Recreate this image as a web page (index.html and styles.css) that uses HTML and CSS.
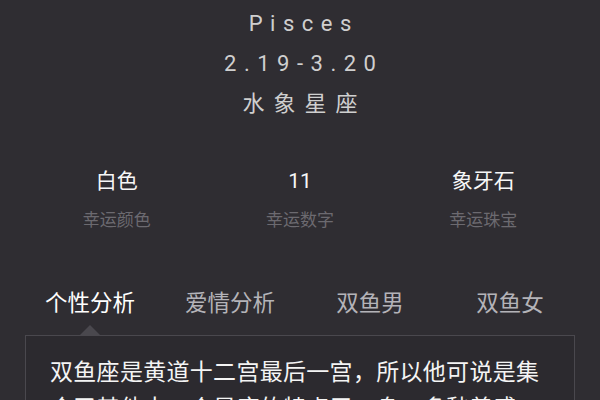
FILE: index.html
```html
<!DOCTYPE html>
<html lang="zh-CN">
<head>
<meta charset="utf-8">
<title>Pisces</title>
<link rel="stylesheet" href="styles.css">
</head>
<body>
<div class="page">
  <header class="sign">
    <div class="sign-name">Pisces</div>
    <div class="sign-date">2.19-3.20</div>
    <div class="sign-elem">水象星座</div>
  </header>
  <section class="stats">
    <div class="stat">
      <div class="stat-value">白色</div>
      <div class="stat-label">幸运颜色</div>
    </div>
    <div class="stat">
      <div class="stat-value">11</div>
      <div class="stat-label">幸运数字</div>
    </div>
    <div class="stat">
      <div class="stat-value">象牙石</div>
      <div class="stat-label">幸运珠宝</div>
    </div>
  </section>
  <nav class="tabs">
    <div class="tab active">个性分析</div>
    <div class="tab">爱情分析</div>
    <div class="tab">双鱼男</div>
    <div class="tab">双鱼女</div>
  </nav>
  <section class="panel">
    <p class="panel-text">双鱼座是黄道十二宫最后一宫，所以他可说是集合了其他十一个星座的特点于一身，多愁善感，温柔浪漫。</p>
  </section>
</div>
</body>
</html>
```

FILE: styles.css
```css
html, body {
  margin: 0;
  padding: 0;
  background: #2f2d32;
}
body {
  font-family: Roboto, "Noto Sans CJK SC", sans-serif;
  color: #f2f2f2;
  width: 600px;
  height: 400px;
  overflow: hidden;
}
.page {
  padding-top: 4px;
}
.sign {
  text-align: center;
  color: #cfcfcf;
  font-size: 22px;
}
.sign-name,
.sign-date {
  line-height: 40px;
  letter-spacing: 7.5px;
  padding-left: 7.5px;
}
.sign-elem {
  line-height: 40px;
  letter-spacing: 9px;
  padding-left: 9px;
}
.stats {
  display: flex;
  margin: 39px 25px 0;
}
.stat {
  flex: 1;
  text-align: center;
}
.stat-value {
  font-size: 21px;
  line-height: 36px;
  color: #f7f7f7;
}
.stat-label {
  font-size: 17px;
  line-height: 42px;
  color: #6c6a70;
}
.tabs {
  display: flex;
  margin: 42px 20px 0;
}
.tab {
  flex: 1;
  text-align: center;
  font-size: 22.5px;
  line-height: 40px;
  color: #b4b3b8;
}
.tab.active {
  color: #ffffff;
}
.panel {
  position: relative;
  margin: 12px 25px 0;
  border: 1px solid #4a484e;
  background: #2c2a2f;
  padding: 19px 24px 0;
}
.panel::before {
  content: "";
  position: absolute;
  left: 54px;
  top: -11px;
  width: 0;
  height: 0;
  border-left: 10px solid transparent;
  border-right: 10px solid transparent;
  border-bottom: 10px solid #4a484e;
}
.panel-text {
  margin: 0;
  font-size: 23px;
  letter-spacing: 0.3px;
  line-height: 36px;
  color: #f4f4f4;
}
```
